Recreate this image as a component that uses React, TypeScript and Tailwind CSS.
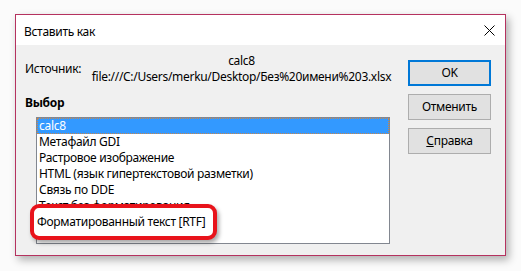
const items = [
  "calc8",
  "Метафайл GDI",
  "Растровое изображение",
  "HTML (язык гипертекстовой разметки)",
  "Связь по DDE",
  "Текст без форматирования",
];

function DialogButton({
  children,
  primary,
}: {
  children: React.ReactNode;
  primary?: boolean;
}) {
  return (
    <button
      className={
        primary
          ? "flex h-[26px] w-[83px] items-center justify-center border-2 border-[#0078d7] bg-[#e1e1e1] text-[12px] text-black"
          : "flex h-[26px] w-[83px] items-center justify-center border border-[#adadad] bg-[#e1e1e1] text-[12px] text-black"
      }
    >
      {children}
    </button>
  );
}

export default function App() {
  return (
    <div
      className="relative h-[271px] w-[521px] overflow-hidden bg-[#fbfbfb] pl-[15px] pt-[14px] tracking-[-0.3px]"
      style={{ fontFamily: '"Noto Sans", "Open Sans", sans-serif' }}
    >
      <div className="flex h-[242px] w-[491px] flex-col border border-[#b5325f] bg-[#f0f0f0] shadow-[3px_4px_8px_rgba(0,0,0,0.3)]">
        {/* title bar */}
        <div className="flex h-[30px] items-center justify-between bg-white pl-[8px] pr-[10px]">
          <span className="pt-[3px] text-[12px] text-black">Вставить как</span>
          <svg width="11" height="11" viewBox="0 0 11 11" className="text-black">
            <path d="M0.5 0.5 L10.5 10.5 M10.5 0.5 L0.5 10.5" stroke="currentColor" strokeWidth="1" />
          </svg>
        </div>

        {/* body */}
        <div className="flex flex-1 pl-[9px] pt-[8px]">
          <div className="flex w-[375px] flex-col">
            <div className="flex items-center">
              <span className="w-[69px] text-[12px] leading-[16px] text-black">Источник:</span>
              <div className="flex w-[295px] flex-col items-center text-[12px] leading-[16px] text-black">
                <span>calc8</span>
                <span className="whitespace-nowrap">file:///C:/Users/merku/Desktop/Без%20имени%203.xlsx</span>
              </div>
            </div>
            <div className="mt-[10px] text-[12px] font-bold leading-[16px] text-black">Выбор</div>
            <div className="ml-[11px] mt-[6px] h-[127px] w-[354px] overflow-hidden border border-[#828790] bg-white">
              {items.map((item, i) => (
                <div
                  key={item}
                  className={
                    i === 0
                      ? "h-[16px] whitespace-nowrap border border-dotted border-[#c9864a] bg-[#3399ff] pl-[1px] text-[12px] leading-[14px] text-white"
                      : "h-[16px] whitespace-nowrap pl-[2px] text-[12px] leading-[16px] text-black"
                  }
                >
                  {item}
                </div>
              ))}
            </div>
          </div>

          <div className="ml-[8px] mt-[7px] flex flex-col gap-[8px]">
            <DialogButton primary>OK</DialogButton>
            <DialogButton>Отменить</DialogButton>
            <DialogButton>
              <span>
                <span className="underline">С</span>правка
              </span>
            </DialogButton>
          </div>
        </div>
      </div>

      {/* red highlight over the last list item */}
      <div className="absolute left-[30px] top-[204px] flex h-[36px] w-[187px] items-center rounded-[9px] border-[4px] border-[#e8131b] bg-white pl-[3px] shadow-[2px_3px_4px_rgba(0,0,0,0.35)]">
        <span className="whitespace-nowrap text-[12px] text-black">Форматированный текст [RTF]</span>
      </div>
    </div>
  );
}
